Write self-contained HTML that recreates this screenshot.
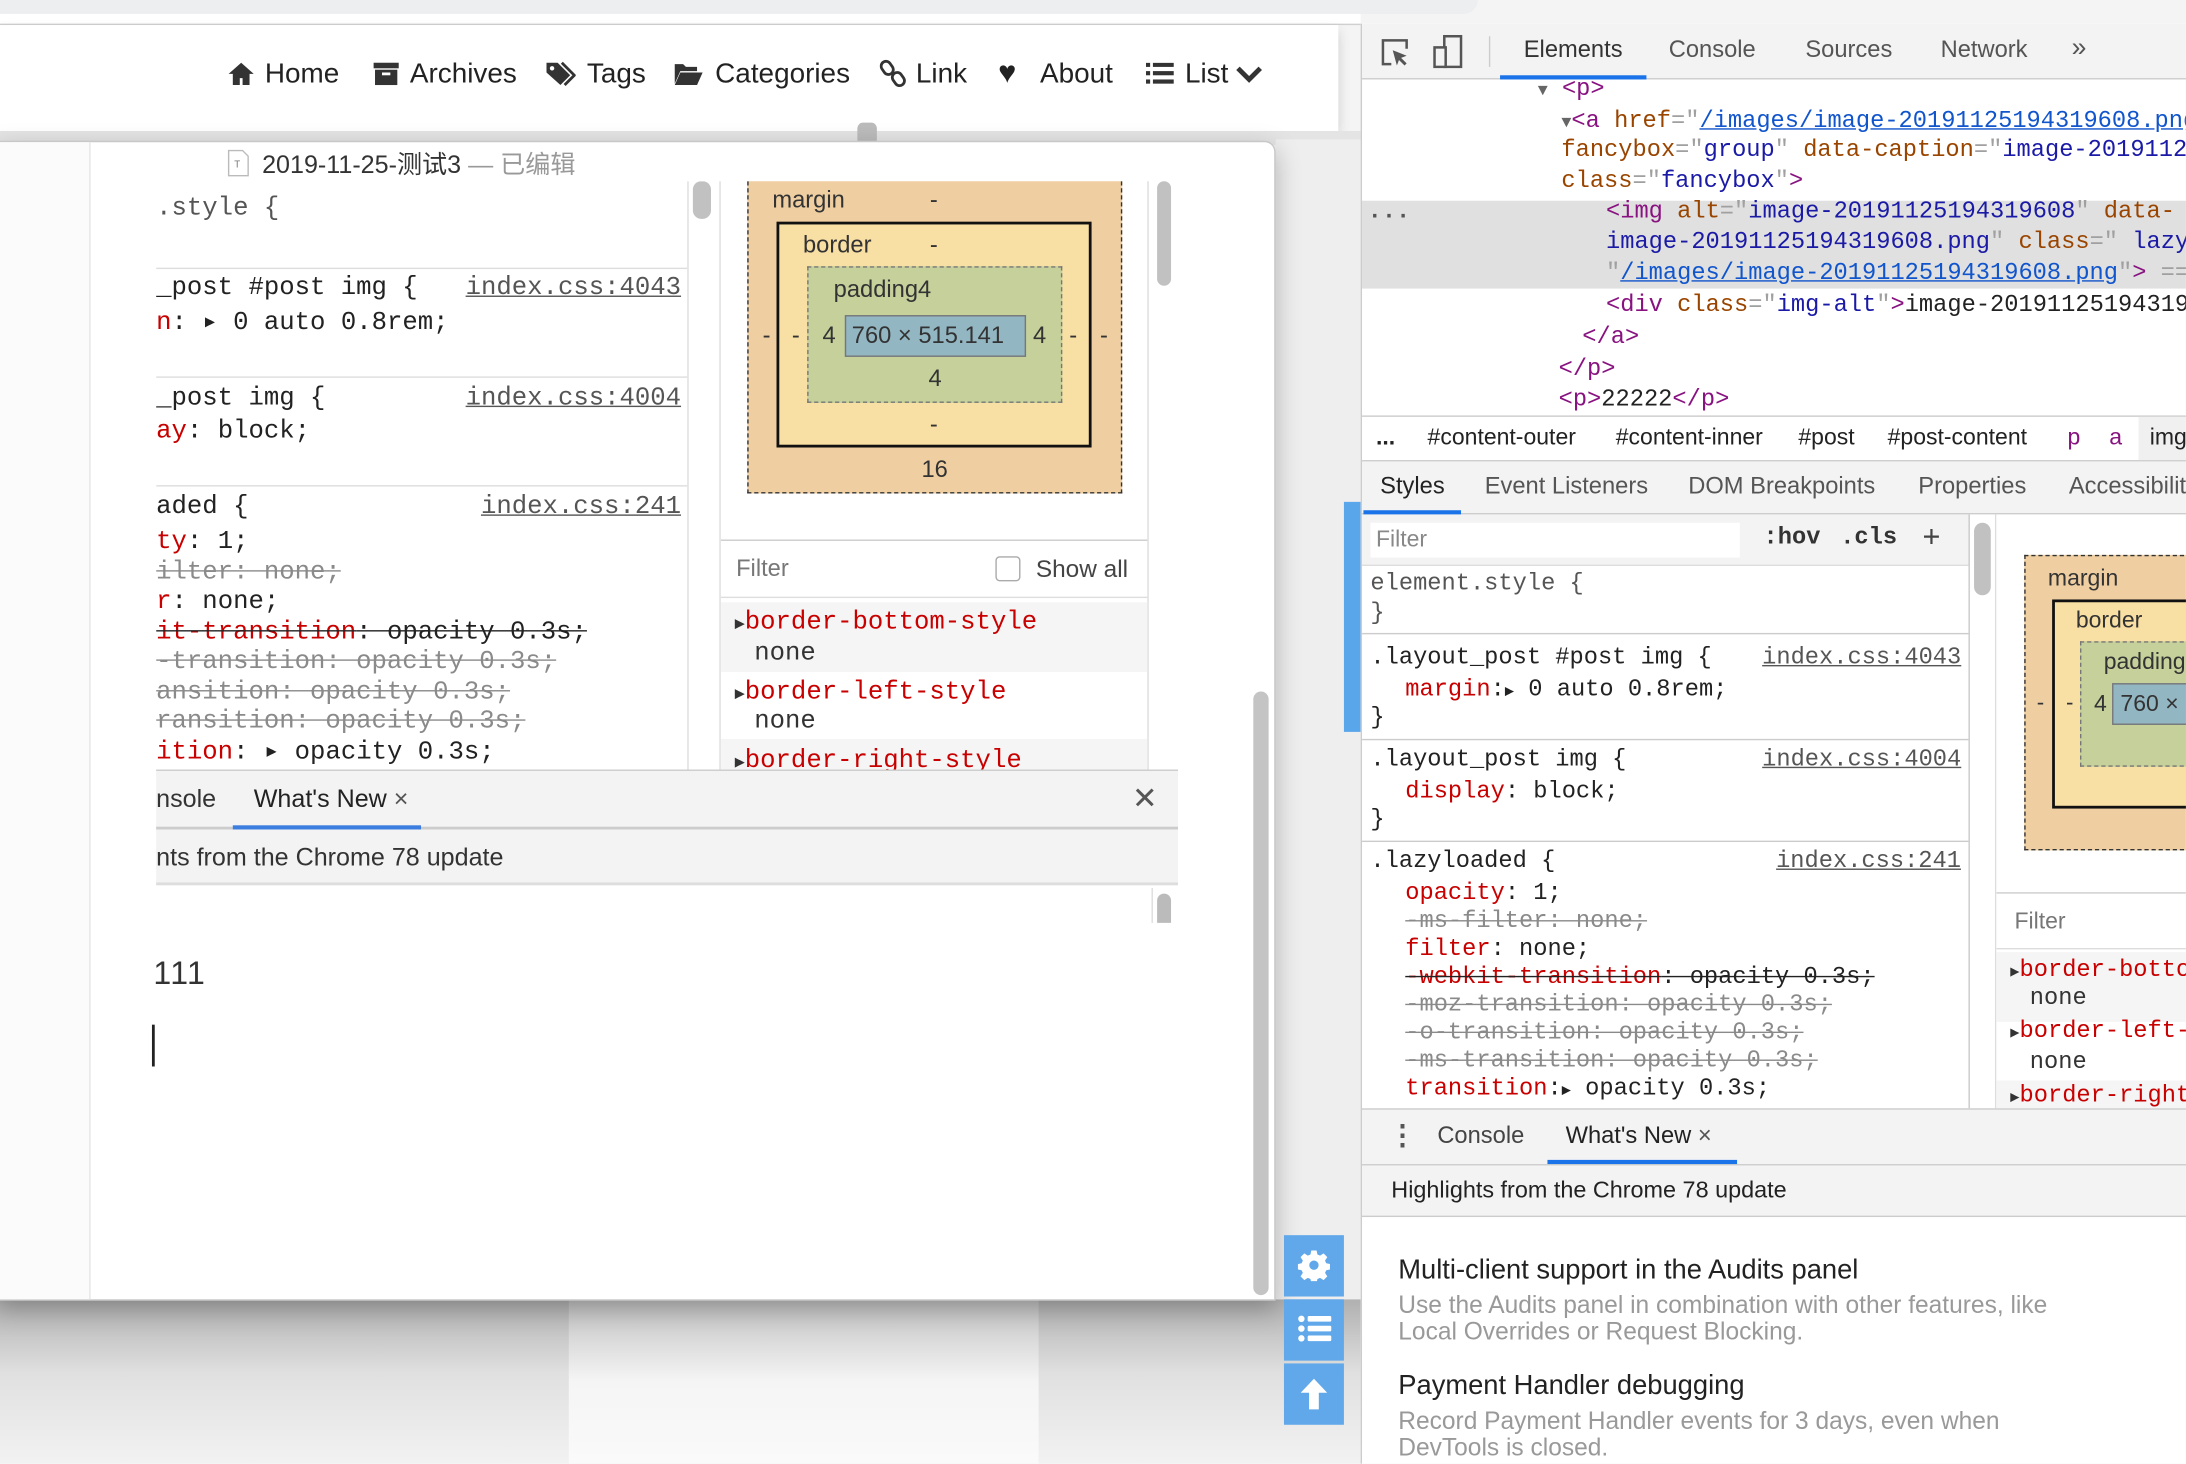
<!DOCTYPE html>
<html><head><meta charset="utf-8">
<style>
*{margin:0;padding:0;box-sizing:border-box}
html,body{width:2186px;height:1464px;overflow:hidden;background:#fff}
#s{position:absolute;left:0;top:0;width:1568px;height:1050px;transform:scale(1.3941);transform-origin:0 0;overflow:hidden;background:#f4f4f4;font-family:"Liberation Sans","Noto Sans CJK SC",sans-serif;color:#333}
.a{position:absolute}
.t{position:absolute;white-space:nowrap;line-height:22px}
.m{font-family:"Liberation Mono","DejaVu Sans Mono",monospace}
.r{color:#c80000}
.g{color:#8a8a8a;text-decoration:line-through}
.st{text-decoration:line-through}
.u{text-decoration:underline;color:#555}
.tg{color:#881280}
.an{color:#994500}
.av{color:#1a1aa6}
.lk{color:#1a1aa6;text-decoration:underline;color:#1155cc}
.pu{color:#a0a0a0}
.nav{font-size:20px;color:#222;top:42px}
.hl{position:absolute;background:#ddd;height:1px}
</style></head><body><div id="s">

<div class="a" style="left:0;top:0;width:1060px;height:10px;background:#eceef0;border-bottom-right-radius:10px"></div>
<div class="a" style="left:0;top:10px;width:976px;height:7px;background:#fff"></div>
<div class="a" style="left:0;top:17px;width:976px;height:1px;background:#d0d0d0"></div>

<div class="a" style="left:0;top:18px;width:960px;height:76px;background:#fff;box-shadow:0 4px 8px rgba(0,0,0,.15)"></div>
<div class="a" style="left:0;top:94px;width:976px;height:10px;background:#e4e4e4"></div>
<div class="a" style="left:615px;top:88px;width:14px;height:16px;background:#bbb;border-radius:4px"></div>

<svg class="a" style="left:163px;top:44px" width="20" height="18" viewBox="0 0 20 18"><path d="M10 1 L1 9 h3 v8 h5 v-5 h2 v5 h5 v-8 h3z" fill="#333"/></svg>
<div class="t nav" style="left:190px">Home</div>
<svg class="a" style="left:267px;top:44px" width="20" height="18" viewBox="0 0 20 18"><rect x="1" y="1" width="18" height="4" fill="#333"/><rect x="2" y="6" width="16" height="11" fill="#333"/><rect x="7" y="8" width="6" height="2" fill="#fff"/></svg>
<div class="t nav" style="left:294px">Archives</div>
<svg class="a" style="left:391px;top:43px" width="22" height="20" viewBox="0 0 22 20"><path d="M1 2 h8 l9 9 -7 7 -10 -9z" fill="#333"/><circle cx="5" cy="6" r="1.6" fill="#fff"/><path d="M12 2 l9 9 -7 7" stroke="#333" stroke-width="2" fill="none"/></svg>
<div class="t nav" style="left:421px">Tags</div>
<svg class="a" style="left:483px;top:44px" width="22" height="18" viewBox="0 0 22 18"><path d="M1 2 h6 l2 2 h8 v3 H5 L1 16z" fill="#333"/><path d="M5 8 h16 l-4 9 H1z" fill="#333"/></svg>
<div class="t nav" style="left:513px">Categories</div>
<svg class="a" style="left:631px;top:42px" width="20" height="22" viewBox="0 0 20 22"><rect x="2" y="2" width="7" height="10" rx="3.5" transform="rotate(-35 5 7)" stroke="#333" stroke-width="2" fill="none"/><rect x="10" y="10" width="7" height="10" rx="3.5" transform="rotate(-35 13 15)" stroke="#333" stroke-width="2" fill="none"/></svg>
<div class="t nav" style="left:657px">Link</div>
<div class="t nav" style="left:716px;font-size:22px;top:41px">&#9829;</div>
<div class="t nav" style="left:746px">About</div>
<svg class="a" style="left:822px;top:45px" width="20" height="16" viewBox="0 0 20 16"><g fill="#333"><rect x="0" y="0" width="3" height="3"/><rect x="5" y="0" width="15" height="3"/><rect x="0" y="6" width="3" height="3"/><rect x="5" y="6" width="15" height="3"/><rect x="0" y="12" width="3" height="3"/><rect x="5" y="12" width="15" height="3"/></g></svg>
<div class="t nav" style="left:850px">List</div>
<svg class="a" style="left:886px;top:47px" width="20" height="14" viewBox="0 0 20 14"><path d="M2 2 l8 8 8 -8" stroke="#333" stroke-width="3.5" fill="none"/></svg>

<div class="a" style="left:0;top:932px;width:976px;height:118px;background:linear-gradient(#b0b0b0,#e0e0e0 45%,#f2f2f2)"></div>
<div class="a" style="left:408px;top:932px;width:337px;height:118px;background:linear-gradient(#c0c0c0,#f5f5f5 50%,#fafafa)"></div>
<div class="a" style="left:915px;top:100px;width:61px;height:832px;background:#eee"></div>

<div class="a" style="left:-2px;top:101px;width:917px;height:832px;background:#fff;border:1px solid #c8c8c8;border-top-right-radius:8px;box-shadow:0 6px 18px rgba(0,0,0,.25)"></div>
<div class="a" style="left:0;top:102px;width:65px;height:830px;background:#fbfbfb;border-right:1px solid #e6e6e6"></div>
<svg class="a" style="left:163px;top:107px" width="16" height="20" viewBox="0 0 16 20"><path d="M1 1 h10 l4 4 v14 H1z" fill="#fff" stroke="#bbb"/><text x="5" y="13" font-size="7" fill="#777" font-family="Liberation Sans">T</text></svg>
<div class="t" style="left:188px;top:107px;font-size:18px;color:#333">2019-11-25-测试3 <span style="color:#999">— 已编辑</span></div>

<div class="a" style="left:112px;top:130px;width:733px;height:532px;overflow:hidden;background:#fff">
 <div class="a" style="left:381px;top:0;width:1px;height:422px;background:#ddd"></div>
 <div class="a" style="left:385px;top:0;width:13px;height:27px;background:#c1c1c1;border-radius:6px"></div>
</div>
<div class="a m" style="left:112px;top:130px;width:381px;height:422px;overflow:hidden;font-size:18.4px;color:#222">
 <div class="t" style="left:0;top:9px;color:#555">.style {</div>
 <div class="hl" style="left:0;top:62px;width:381px"></div>
 <div class="t" style="left:0;top:66px">_post #post img {</div>
 <div class="t u" style="left:222px;top:66px">index.css:4043</div>
 <div class="t" style="left:0;top:91px"><span class="r">n</span>: &#9656; 0 auto 0.8rem;</div>
 <div class="hl" style="left:0;top:140px;width:381px"></div>
 <div class="t" style="left:0;top:145px">_post img {</div>
 <div class="t u" style="left:222px;top:145px">index.css:4004</div>
 <div class="t" style="left:0;top:169px"><span class="r">ay</span>: block;</div>
 <div class="hl" style="left:0;top:218px;width:381px"></div>
 <div class="t" style="left:0;top:223px">aded {</div>
 <div class="t u" style="left:233px;top:223px">index.css:241</div>
 <div class="t" style="left:0;top:248px"><span class="r">ty</span>: 1;</div>
 <div class="t g" style="left:0;top:270px">ilter: none;</div>
 <div class="t" style="left:0;top:291px"><span class="r">r</span>: none;</div>
 <div class="t st" style="left:0;top:313px"><span class="r">it-transition</span>: opacity 0.3s;</div>
 <div class="t g" style="left:0;top:334px">-transition: opacity 0.3s;</div>
 <div class="t g" style="left:0;top:356px">ansition: opacity 0.3s;</div>
 <div class="t g" style="left:0;top:377px">ransition: opacity 0.3s;</div>
 <div class="t" style="left:0;top:399px"><span class="r">ition</span>: &#9656; opacity 0.3s;</div>
</div>
<div class="a" style="left:516px;top:130px;width:308px;height:422px;overflow:hidden;background:#fff;border-left:1px solid #ddd;border-right:1px solid #ddd">
 <div class="a" style="left:19px;top:-10px;width:269px;height:234px;background:#efcfa2;border:1px dashed #333"></div>
 <div class="t" style="left:37px;top:3px;font-size:17px">margin</div><div class="t" style="left:150px;top:3px;font-size:17px">-</div>
 <div class="a" style="left:40px;top:29px;width:226px;height:162px;background:#f8dfa3;border:2px solid #111"></div>
 <div class="t" style="left:59px;top:35px;font-size:17px">border</div><div class="t" style="left:150px;top:35px;font-size:17px">-</div>
 <div class="a" style="left:62px;top:61px;width:183px;height:98px;background:#c5d09a;border:1px dashed #777"></div>
 <div class="t" style="left:81px;top:67px;font-size:17px">padding4</div>
 <div class="a" style="left:89px;top:96px;width:130px;height:30px;background:#93b6c3;border:1px solid #777"></div>
 <div class="t" style="left:94px;top:100px;font-size:17px">760 × 515.141</div>
 <div class="t" style="left:73px;top:100px;font-size:17px">4</div><div class="t" style="left:224px;top:100px;font-size:17px">4</div>
 <div class="t" style="left:30px;top:100px;font-size:17px">-</div><div class="t" style="left:51px;top:100px;font-size:17px">-</div>
 <div class="t" style="left:250px;top:100px;font-size:17px">-</div><div class="t" style="left:272px;top:100px;font-size:17px">-</div>
 <div class="t" style="left:149px;top:131px;font-size:17px">4</div>
 <div class="t" style="left:150px;top:164px;font-size:17px">-</div>
 <div class="t" style="left:144px;top:196px;font-size:17px">16</div>
 <div class="hl" style="left:0;top:257px;width:308px;background:#ccc"></div>
 <div class="t" style="left:11px;top:267px;font-size:17px;color:#777">Filter</div>
 <div class="a" style="left:197px;top:269px;width:18px;height:18px;border:1px solid #aaa;border-radius:3px"></div>
 <div class="t" style="left:226px;top:267px;font-size:17.5px;color:#444">Show all</div>
 <div class="hl" style="left:0;top:298px;width:308px"></div>
 <div class="a" style="left:0;top:302px;width:308px;height:50px;background:#f5f5f5"></div>
 <div class="a" style="left:0;top:400px;width:308px;height:30px;background:#f5f5f5"></div>
 <div class="t m" style="left:10px;top:306px;font-size:18.4px"><span style="font-size:12px">&#9654;</span><span class="r">border-bottom-style</span></div>
 <div class="t m" style="left:24px;top:328px;font-size:18.4px">none</div>
 <div class="t m" style="left:10px;top:356px;font-size:18.4px"><span style="font-size:12px">&#9654;</span><span class="r">border-left-style</span></div>
 <div class="t m" style="left:24px;top:377px;font-size:18.4px">none</div>
 <div class="t m" style="left:10px;top:405px;font-size:18.4px"><span style="font-size:12px">&#9654;</span><span class="r">border-right-style</span></div>
</div>
<div class="a" style="left:830px;top:130px;width:10px;height:75px;background:#c1c1c1;border-radius:5px"></div>
<div class="a" style="left:112px;top:552px;width:733px;height:43px;background:#f3f3f3;border-top:1px solid #ccc;border-bottom:2px solid #ccc"></div>
<div class="t" style="left:112px;top:562px;font-size:18px;color:#333">nsole</div>
<div class="t" style="left:182px;top:562px;font-size:18px;color:#222">What's New <span style="color:#555">×</span></div>
<div class="a" style="left:167px;top:592px;width:135px;height:3px;background:#3c7de0"></div>
<div class="t" style="left:812px;top:562px;font-size:22px;color:#555">✕</div>
<div class="a" style="left:112px;top:595px;width:733px;height:40px;background:#f3f3f3;border-bottom:2px solid #ddd"></div>
<div class="t" style="left:112px;top:604px;font-size:18px;color:#333">nts from the Chrome 78 update</div>
<div class="a" style="left:826px;top:637px;width:1px;height:25px;background:#ddd"></div>
<div class="a" style="left:830px;top:641px;width:10px;height:21px;background:#bbb;border-radius:5px 5px 0 0"></div>

<div class="t" style="left:110px;top:687px;font-size:23px;color:#333;letter-spacing:1px">111</div>
<div class="a" style="left:109px;top:735px;width:1.5px;height:30px;background:#222"></div>
<div class="a" style="left:899px;top:496px;width:11px;height:433px;background:#c4c4c4;border-radius:6px"></div>

<div class="a" style="left:964px;top:360px;width:12px;height:165px;background:#5aa6ea"></div>
<div class="a" style="left:921px;top:886px;width:43px;height:44px;background:#60a8ea"></div>
<svg class="a" style="left:931px;top:896px" width="23" height="23" viewBox="0 0 24 24"><path fill="#fff" d="M10 1h4l.6 3 2 .9 2.6-1.7 2.8 2.8-1.7 2.6.9 2 3 .6v4l-3 .6-.9 2 1.7 2.6-2.8 2.8-2.6-1.7-2 .9-.6 3h-4l-.6-3-2-.9-2.6 1.7-2.8-2.8 1.7-2.6-.9-2-3-.6v-4l3-.6.9-2-1.7-2.6 2.8-2.8 2.6 1.7 2-.9z"/><circle cx="12" cy="12" r="3.5" fill="#60a8ea"/></svg>
<div class="a" style="left:921px;top:932px;width:43px;height:44px;background:#60a8ea"></div>
<svg class="a" style="left:931px;top:943px" width="24" height="20" viewBox="0 0 24 20"><g fill="#fff"><circle cx="2.5" cy="3" r="2.3"/><rect x="7" y="1" width="17" height="4" rx="1"/><circle cx="2.5" cy="10" r="2.3"/><rect x="7" y="8" width="17" height="4" rx="1"/><circle cx="2.5" cy="17" r="2.3"/><rect x="7" y="15" width="17" height="4" rx="1"/></g></svg>
<div class="a" style="left:921px;top:978px;width:43px;height:44px;background:#60a8ea"></div>
<svg class="a" style="left:931px;top:987px" width="23" height="26" viewBox="0 0 23 26"><path d="M11.5 2 L2 12 h6 v12 h7 V12 h6z" fill="#fff"/></svg>

<div class="a" style="left:976px;top:17px;width:592px;height:1033px;background:#fff;border-left:1px solid #ccc"></div>
<div class="a" style="left:977px;top:17px;width:591px;height:40px;background:#f3f3f3;border-bottom:1px solid #ccc"></div>
<svg class="a" style="left:990px;top:27px" width="22" height="22" viewBox="0 0 22 22"><path d="M8 19 H2 V2 h17 v6" stroke="#555" stroke-width="1.8" fill="none"/><path d="M9 9 l10 4 -4 1.5 4 4 -1.5 1.5 -4 -4 -1.5 4z" fill="#555"/></svg>
<svg class="a" style="left:1027px;top:25px" width="24" height="24" viewBox="0 0 24 24"><rect x="9" y="1" width="12" height="22" stroke="#555" stroke-width="1.8" fill="none"/><rect x="2" y="9" width="8" height="14" stroke="#555" stroke-width="1.8" fill="#f3f3f3"/></svg>
<div class="a" style="left:1068px;top:26px;width:1px;height:22px;background:#ccc"></div>
<div class="t" style="left:1093px;top:25px;font-size:17px;color:#333">Elements</div>
<div class="a" style="left:1076px;top:54px;width:105px;height:3px;background:#1a73e8"></div>
<div class="t" style="left:1197px;top:25px;font-size:17px;color:#555">Console</div>
<div class="t" style="left:1295px;top:25px;font-size:17px;color:#555">Sources</div>
<div class="t" style="left:1392px;top:25px;font-size:17px;color:#555">Network</div>
<div class="t" style="left:1486px;top:24px;font-size:19px;color:#555">»</div>

<div class="a" style="left:977px;top:144px;width:591px;height:63px;background:#e0e0e0"></div>
<div class="a m" style="left:977px;top:57px;width:591px;height:241px;overflow:hidden;font-size:17px;color:#222">
 <div class="t" style="left:126px;top:-3px"><span style="color:#666;font-size:12px">&#9660;</span> <span class="tg">&lt;p&gt;</span></div>
 <div class="t" style="left:143px;top:20px"><span style="color:#666;font-size:12px">&#9660;</span><span class="tg">&lt;a</span> <span class="an">href</span><span class="pu">="</span><span class="lk">/images/image-20191125194319608.png</span></div>
 <div class="t" style="left:143px;top:41px"><span class="an">fancybox</span><span class="pu">="</span><span class="av">group</span><span class="pu">"</span> <span class="an">data-caption</span><span class="pu">="</span><span class="av">image-20191125194319608</span></div>
 <div class="t" style="left:143px;top:63px"><span class="an">class</span><span class="pu">="</span><span class="av">fancybox</span><span class="pu">"</span><span class="tg">&gt;</span></div>
 <div class="t" style="left:4px;top:85px;color:#555;font-weight:bold">...</div>
 <div class="t" style="left:175px;top:85px"><span class="tg">&lt;img</span> <span class="an">alt</span><span class="pu">="</span><span class="av">image-20191125194319608</span><span class="pu">"</span> <span class="an">data-</span></div>
 <div class="t" style="left:175px;top:107px"><span class="av">image-20191125194319608.png</span><span class="pu">"</span> <span class="an">class</span><span class="pu">="</span> <span class="av">lazyloaded</span></div>
 <div class="t" style="left:175px;top:129px"><span class="pu">"</span><span class="lk">/images/image-20191125194319608.png</span><span class="pu">"</span><span class="tg">&gt;</span> <span class="pu">== $0</span></div>
 <div class="t" style="left:175px;top:152px"><span class="tg">&lt;div</span> <span class="an">class</span><span class="pu">="</span><span class="av">img-alt</span><span class="pu">"</span><span class="tg">&gt;</span>image-20191125194319608</div>
 <div class="t" style="left:158px;top:175px"><span class="tg">&lt;/a&gt;</span></div>
 <div class="t" style="left:141px;top:198px"><span class="tg">&lt;/p&gt;</span></div>
 <div class="t" style="left:141px;top:220px"><span class="tg">&lt;p&gt;</span>22222<span class="tg">&lt;/p&gt;</span></div>
</div>
<div class="a" style="left:977px;top:298px;width:591px;height:33px;background:#fff;border-top:1px solid #ccc;border-bottom:1px solid #ccc"></div>
<div class="a" style="left:1534px;top:299px;width:34px;height:31px;background:#f0f0f0"></div>
<div class="t" style="left:987px;top:303px;font-size:16.5px;color:#222;font-weight:bold">...</div>
<div class="t" style="left:1024px;top:303px;font-size:16.5px;color:#222">#content-outer</div>
<div class="t" style="left:1159px;top:303px;font-size:16.5px;color:#222">#content-inner</div>
<div class="t" style="left:1290px;top:303px;font-size:16.5px;color:#222">#post</div>
<div class="t" style="left:1354px;top:303px;font-size:16.5px;color:#222">#post-content</div>
<div class="t" style="left:1483px;top:303px;font-size:16.5px;color:#881280">p</div>
<div class="t" style="left:1513px;top:303px;font-size:16.5px;color:#881280">a</div>
<div class="t" style="left:1542px;top:303px;font-size:16.5px;color:#222">img</div>
<div class="a" style="left:977px;top:331px;width:591px;height:38px;background:#f3f3f3;border-bottom:1px solid #ccc"></div>
<div class="t" style="left:990px;top:338px;font-size:17px;color:#222">Styles</div>
<div class="a" style="left:978px;top:366px;width:70px;height:3px;background:#1a73e8"></div>
<div class="t" style="left:1065px;top:338px;font-size:17px;color:#555">Event Listeners</div>
<div class="t" style="left:1211px;top:338px;font-size:17px;color:#555">DOM Breakpoints</div>
<div class="t" style="left:1376px;top:338px;font-size:17px;color:#555">Properties</div>
<div class="t" style="left:1484px;top:338px;font-size:17px;color:#555">Accessibility</div>

<div class="a" style="left:977px;top:369px;width:435px;height:37px;background:#f3f3f3;border-bottom:1px solid #ddd"></div>
<div class="a" style="left:983px;top:375px;width:265px;height:25px;background:#fff"></div>
<div class="t" style="left:987px;top:376px;font-size:16.5px;color:#888">Filter</div>
<div class="t m" style="left:1265px;top:376px;font-size:17px;color:#333;font-weight:bold">:hov</div>
<div class="t m" style="left:1320px;top:376px;font-size:17px;color:#333;font-weight:bold">.cls</div>
<div class="t" style="left:1379px;top:374px;font-size:22px;color:#444">+</div>
<div class="a" style="left:1412px;top:369px;width:20px;height:426px;background:#fff;border-left:1px solid #ddd;border-right:1px solid #ddd"></div>
<div class="a" style="left:1416px;top:375px;width:12px;height:52px;background:#c1c1c1;border-radius:6px"></div>
<div class="a m" style="left:977px;top:406px;width:435px;height:389px;overflow:hidden;font-size:17px;color:#222">
 <div class="t" style="left:6px;top:3px;color:#555">element.style {</div>
 <div class="t" style="left:6px;top:24px;color:#555">}</div>
 <div class="hl" style="left:0;top:48px;width:435px;background:#ccc"></div>
 <div class="t" style="left:6px;top:56px">.layout_post #post img {</div>
 <div class="t u" style="left:287px;top:56px">index.css:4043</div>
 <div class="t" style="left:31px;top:79px"><span class="r">margin</span>:<span style="font-size:11px">&#9654;</span> 0 auto 0.8rem;</div>
 <div class="t" style="left:6px;top:99px">}</div>
 <div class="hl" style="left:0;top:124px;width:435px;background:#ccc"></div>
 <div class="t" style="left:6px;top:129px">.layout_post img {</div>
 <div class="t u" style="left:287px;top:129px">index.css:4004</div>
 <div class="t" style="left:31px;top:152px"><span class="r">display</span>: block;</div>
 <div class="t" style="left:6px;top:172px">}</div>
 <div class="hl" style="left:0;top:197px;width:435px;background:#ccc"></div>
 <div class="t" style="left:6px;top:202px">.lazyloaded {</div>
 <div class="t u" style="left:297px;top:202px">index.css:241</div>
 <div class="t" style="left:31px;top:225px"><span class="r">opacity</span>: 1;</div>
 <div class="t g" style="left:31px;top:245px">-ms-filter: none;</div>
 <div class="t" style="left:31px;top:265px"><span class="r">filter</span>: none;</div>
 <div class="t st" style="left:31px;top:285px"><span class="r">-webkit-transition</span>: opacity 0.3s;</div>
 <div class="t g" style="left:31px;top:305px">-moz-transition: opacity 0.3s;</div>
 <div class="t g" style="left:31px;top:325px">-o-transition: opacity 0.3s;</div>
 <div class="t g" style="left:31px;top:345px">-ms-transition: opacity 0.3s;</div>
 <div class="t" style="left:31px;top:365px"><span class="r">transition</span>:<span style="font-size:11px">&#9654;</span> opacity 0.3s;</div>
</div>
<div class="a" style="left:1412px;top:369px;width:1px;height:426px;background:#ccc"></div>
<div class="a" style="left:1432px;top:369px;width:136px;height:426px;overflow:hidden;background:#fff">
 <div class="a" style="left:20px;top:29px;width:140px;height:212px;background:#efcfa2;border:1px dashed #333"></div>
 <div class="t" style="left:37px;top:35px;font-size:16.5px">margin</div>
 <div class="a" style="left:40px;top:61px;width:120px;height:150px;background:#f8dfa3;border:2px solid #111"></div>
 <div class="t" style="left:57px;top:65px;font-size:16.5px">border</div>
 <div class="a" style="left:60px;top:91px;width:100px;height:90px;background:#c5d09a;border:1px dashed #777"></div>
 <div class="t" style="left:77px;top:95px;font-size:16.5px">padding4</div>
 <div class="a" style="left:83px;top:121px;width:80px;height:30px;background:#93b6c3;border:1px solid #777"></div>
 <div class="t" style="left:89px;top:125px;font-size:16.5px">760 ×</div>
 <div class="t" style="left:70px;top:125px;font-size:16.5px">4</div>
 <div class="t" style="left:29px;top:125px;font-size:16px">-</div><div class="t" style="left:50px;top:125px;font-size:16px">-</div>
 <div class="hl" style="left:0;top:271px;width:136px;background:#ccc"></div>
 <div class="t" style="left:13px;top:281px;font-size:16.5px;color:#777">Filter</div>
 <div class="hl" style="left:0;top:311px;width:136px"></div>
 <div class="a" style="left:0;top:314px;width:136px;height:50px;background:#f5f5f5"></div>
 <div class="a" style="left:0;top:406px;width:136px;height:30px;background:#f5f5f5"></div>
 <div class="t m" style="left:10px;top:317px;font-size:17px"><span style="font-size:11px">&#9654;</span><span class="r">border-bottom-style</span></div>
 <div class="t m" style="left:24px;top:337px;font-size:17px">none</div>
 <div class="t m" style="left:10px;top:361px;font-size:17px"><span style="font-size:11px">&#9654;</span><span class="r">border-left-style</span></div>
 <div class="t m" style="left:24px;top:383px;font-size:17px">none</div>
 <div class="t m" style="left:10px;top:407px;font-size:17px"><span style="font-size:11px">&#9654;</span><span class="r">border-right-style</span></div>
</div>

<div class="a" style="left:977px;top:795px;width:591px;height:41px;background:#f3f3f3;border-top:1px solid #ccc;border-bottom:1px solid #ccc"></div>
<div class="t" style="left:996px;top:804px;font-size:20px;color:#555;font-weight:bold">&#8942;</div>
<div class="t" style="left:1031px;top:804px;font-size:17px;color:#444">Console</div>
<div class="t" style="left:1123px;top:804px;font-size:17px;color:#222">What's New <span style="color:#555">×</span></div>
<div class="a" style="left:1110px;top:832px;width:136px;height:3px;background:#1a73e8"></div>
<div class="a" style="left:977px;top:836px;width:591px;height:37px;background:#f3f3f3;border-bottom:1px solid #ccc"></div>
<div class="t" style="left:998px;top:843px;font-size:16.8px;color:#222">Highlights from the Chrome 78 update</div>
<div class="t" style="left:1003px;top:900px;font-size:19.6px;color:#222">Multi-client support in the Audits panel</div>
<div class="t" style="left:1003px;top:927px;font-size:17.6px;color:#999;line-height:19px">Use the Audits panel in combination with other features, like<br>Local Overrides or Request Blocking.</div>
<div class="t" style="left:1003px;top:983px;font-size:19.6px;color:#222">Payment Handler debugging</div>
<div class="t" style="left:1003px;top:1010px;font-size:17.6px;color:#999;line-height:19px">Record Payment Handler events for 3 days, even when<br>DevTools is closed.</div>

</div></body></html>
